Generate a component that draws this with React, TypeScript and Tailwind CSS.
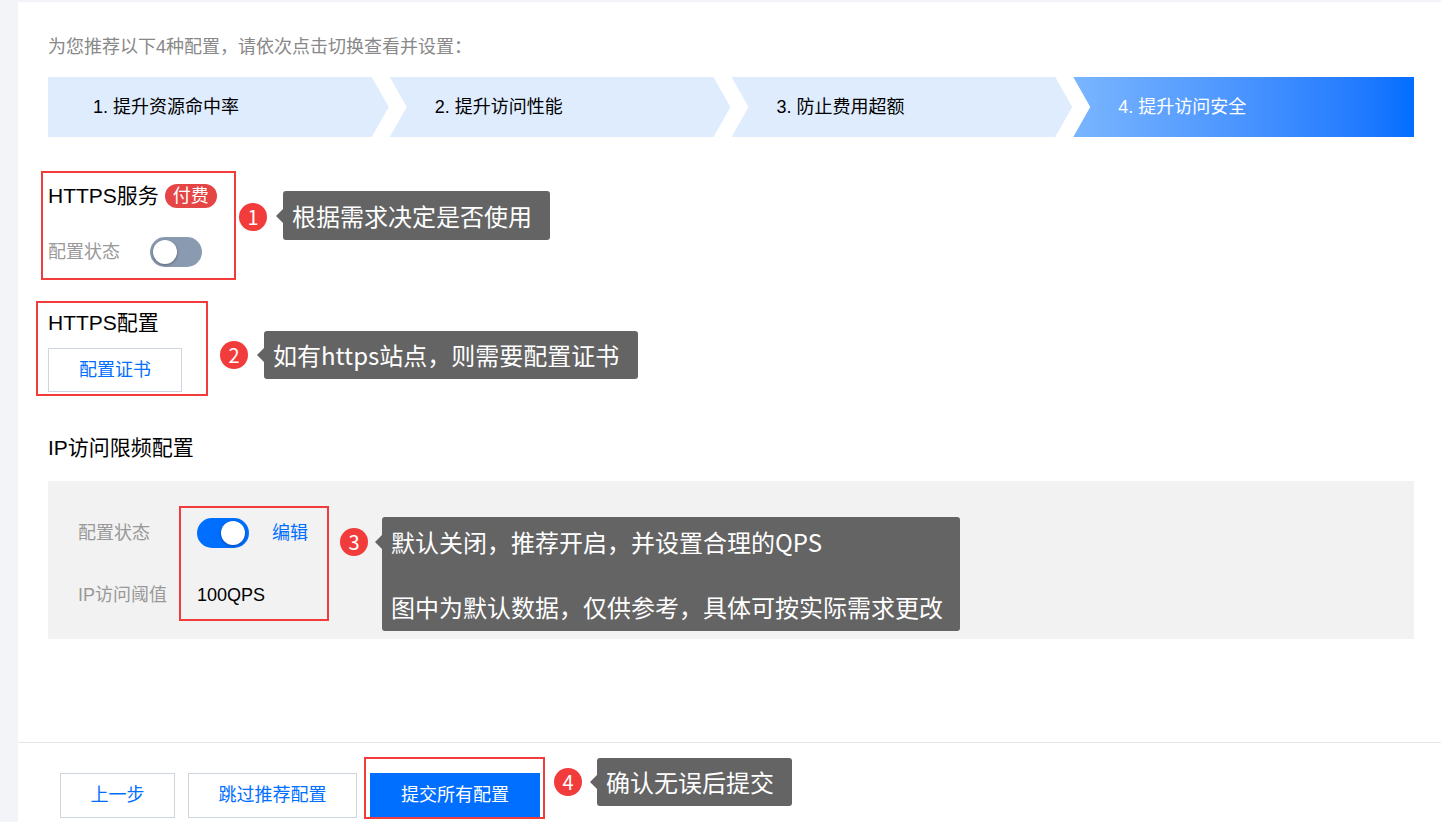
import React from "react";

const steps = ["1. 提升资源命中率", "2. 提升访问性能", "3. 防止费用超额", "4. 提升访问安全"];

const clips = [
  "[clip-path:polygon(0_0,calc(100%_-_17px)_0,100%_50%,calc(100%_-_17px)_100%,0_100%)]",
  "[clip-path:polygon(0_0,calc(100%_-_17px)_0,100%_50%,calc(100%_-_17px)_100%,0_100%,17px_50%)]",
  "[clip-path:polygon(0_0,calc(100%_-_17px)_0,100%_50%,calc(100%_-_17px)_100%,0_100%,17px_50%)]",
  "[clip-path:polygon(0_0,100%_0,100%_100%,0_100%,17px_50%)]",
];

const Badge = ({ n, className }: { n: number; className: string }) => (
  <div
    className={`absolute w-[28px] h-[28px] rounded-full bg-[#f23b3b] text-white text-[20px] leading-[28px] text-center ${className}`}
    style={{ fontFamily: '"Noto Sans CJK SC", sans-serif' }}
  >
    {n}
  </div>
);

interface TipProps {
  className: string;
  arrowTop?: string;
  children: React.ReactNode;
}

const Tip = ({ className, arrowTop = "top-1/2 -translate-y-1/2", children }: TipProps) => (
  <div
    className={`absolute bg-[#646464] rounded-[3px] text-white text-[24px] pl-[9px] ${className}`}
    style={{ fontFamily: '"Noto Sans CJK SC", sans-serif' }}
  >
    <span
      className={`absolute -left-[7px] w-0 h-0 border-y-[7px] border-y-transparent border-r-[7px] border-r-[#646464] ${arrowTop}`}
    />
    {children}
  </div>
);

const Toggle = ({ on }: { on: boolean }) => (
  <div
    className={`relative w-[52px] h-[30px] rounded-full ${on ? "bg-[#006eff]" : "bg-[#8a9ab0]"}`}
  >
    <div
      className={`absolute top-[3px] w-[24px] h-[24px] rounded-full bg-white shadow-[0_1px_3px_rgba(0,0,0,0.35)] ${on ? "right-[4px]" : "left-[3px]"}`}
    />
  </div>
);

const RedBox = ({ className }: { className: string }) => (
  <div className={`absolute border-2 border-[#f23b3b] pointer-events-none ${className}`} />
);

export default function App() {
  return (
    <div
      className="w-[1441px] h-[822px] overflow-hidden bg-[#f3f4f7] pt-[2px] pl-[18px] flex"
      style={{ fontFamily: '"Liberation Sans", "Noto Sans CJK SC", sans-serif' }}
    >
      <div className="flex-1 bg-white flex flex-col">
        <div className="flex-1 pl-[30px] pr-[27px] pt-[33px]">
          <p className="text-[18px] leading-[24px] text-[#888]">
            为您推荐以下4种配置，请依次点击切换查看并设置：
          </p>

          <div className="flex h-[60px] gap-[1px] mt-[18px]">
            {steps.map((s, i) => (
              <div
                key={s}
                className={`flex-1 flex items-center pl-[45px] text-[18px] ${clips[i]} ${
                  i === 3
                    ? "bg-gradient-to-r from-[#7ab5ff] to-[#006eff] text-white"
                    : "bg-[#dfecfd] text-black"
                }`}
              >
                {s}
              </div>
            ))}
          </div>

          {/* HTTPS服务 */}
          <div className="relative mt-[34px] pt-[10px] pb-[13px]">
            <div className="flex items-center h-[30px] gap-[6px]">
              <span className="text-[21px] text-black">HTTPS服务</span>
              <span className="h-[24px] px-[8px] rounded-full bg-[#e54545] text-white text-[18px] leading-[24px]">
                付费
              </span>
            </div>
            <div className="flex items-center mt-[26px] h-[30px]">
              <span className="w-[102px] text-[18px] text-[#999]">配置状态</span>
              <Toggle on={false} />
            </div>
            <RedBox className="-left-[7px] top-0 w-[195px] h-[109px]" />
            <Badge n={1} className="left-[191px] top-[32px]" />
            <Tip className="left-[235px] top-[20px] w-[267px] h-[49px] leading-[49px]">
              根据需求决定是否使用
            </Tip>
          </div>

          {/* HTTPS配置 */}
          <div className="relative mt-[21px] pt-[7px] pb-[4px]">
            <div className="h-[30px] flex items-center text-[21px] text-black">HTTPS配置</div>
            <button className="mt-[10px] w-[134px] h-[44px] border border-[#cfd5de] text-[#006eff] text-[18px]">
              配置证书
            </button>
            <RedBox className="-left-[12px] top-0 w-[172px] h-[95px]" />
            <Badge n={2} className="left-[172px] top-[40px]" />
            <Tip className="left-[216px] top-[30px] w-[374px] h-[48px] leading-[48px]">
              如有https站点，则需要配置证书
            </Tip>
          </div>

          {/* IP访问限频配置 */}
          <div className="mt-[37px] h-[30px] flex items-center text-[21px] text-black">
            IP访问限频配置
          </div>
          <div className="relative mt-[18px] h-[158px] bg-[#f2f2f2] pl-[30px] pt-[37px]">
            <div className="flex items-center h-[30px]">
              <span className="w-[119px] text-[18px] text-[#999]">配置状态</span>
              <Toggle on />
              <span className="ml-[23px] text-[18px] text-[#006eff]">编辑</span>
            </div>
            <div className="flex items-center h-[30px] mt-[32px]">
              <span className="w-[119px] text-[18px] text-[#999]">IP访问阈值</span>
              <span className="text-[18px] text-black">100QPS</span>
            </div>
            <RedBox className="left-[131px] top-[25px] w-[150px] h-[115px]" />
            <Badge n={3} className="left-[292px] top-[47px]" />
            <Tip
              className="left-[334px] top-[36px] w-[578px] h-[114px] pt-[10px] flex flex-col gap-[35px] leading-[30px]"
              arrowTop="top-[18px]"
            >
              <span>默认关闭，推荐开启，并设置合理的QPS</span>
              <span>图中为默认数据，仅供参考，具体可按实际需求更改</span>
            </Tip>
          </div>
        </div>

        {/* footer */}
        <div className="h-[80px] border-t border-[#e5e7eb] pt-[30px] pl-[42px] flex items-start gap-[13px]">
          <button className="w-[115px] h-[45px] border border-[#cfd5de] text-[#006eff] text-[18px]">
            上一步
          </button>
          <button className="w-[169px] h-[45px] border border-[#cfd5de] text-[#006eff] text-[18px]">
            跳过推荐配置
          </button>
          <div className="relative">
            <button className="w-[170px] h-[45px] bg-[#006eff] text-white text-[18px]">
              提交所有配置
            </button>
            <RedBox className="-left-[6px] -top-[16px] w-[181px] h-[62px]" />
            <Badge n={4} className="left-[184px] -top-[5px]" />
            <Tip className="left-[227px] -top-[15px] w-[195px] h-[48px] leading-[48px]">
              确认无误后提交
            </Tip>
          </div>
        </div>
      </div>
    </div>
  );
}
